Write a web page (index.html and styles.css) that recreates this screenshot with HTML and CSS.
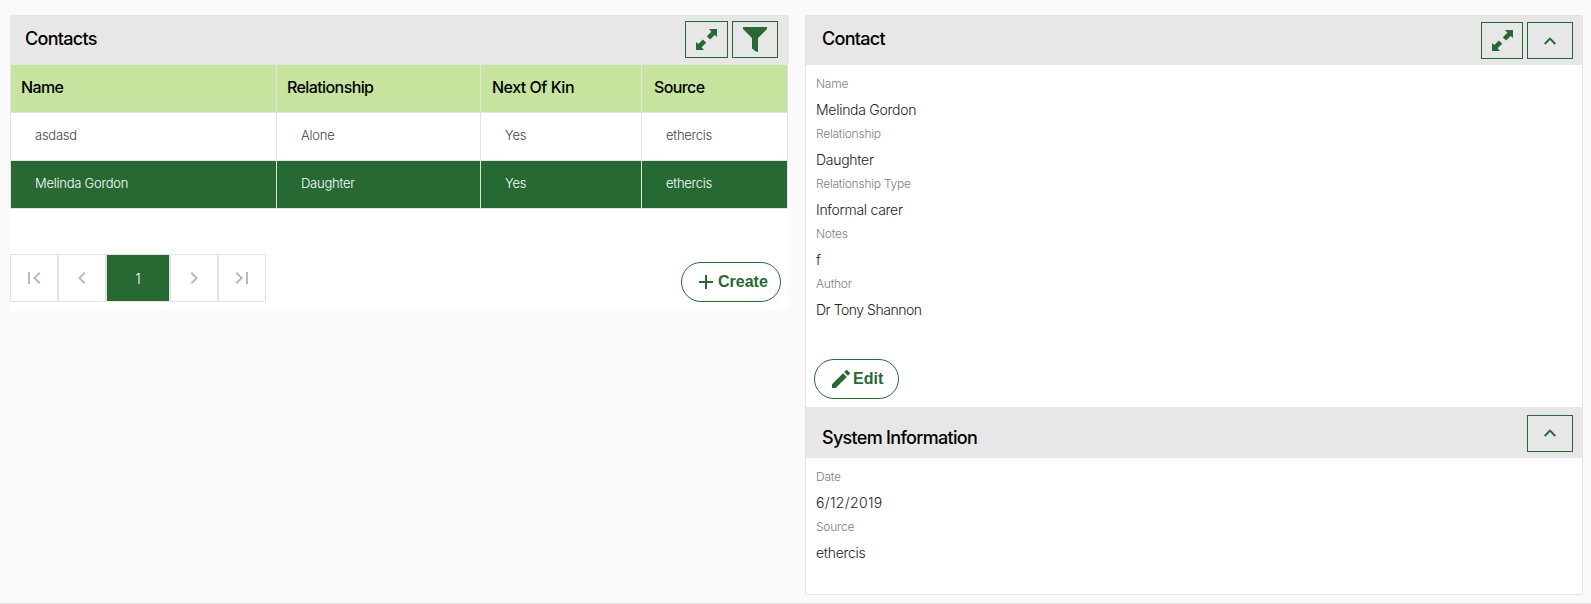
FILE: index.html
```
<!DOCTYPE html>
<html lang="en">
<head>
<meta charset="utf-8">
<title>Contacts</title>
<link rel="stylesheet" href="styles.css">
</head>
<body>
<main class="page">
  <section class="panel list-panel">
    <header class="panel-head">
      <h3 class="panel-title">Contacts</h3>
      <div class="tools">
        <button class="tool expand"><svg width="21" height="21" viewBox="0 0 21 21"><path d="M13 0h8v8l-2.300-2.100-4.600 4.600-3.300-3.200 4.600-4.600zM0 13l2.300 2.100 4.600-4.600 3.300 3.200-4.600 4.600L8 21H0z"/></svg></button>
        <button class="tool"><svg width="24" height="25" viewBox="0 0 24 25"><path d="M0 0h24v2L15 11v14l-2-.5-4-3V11L0 2z"/></svg></button>
      </div>
    </header>
    <table class="contacts">
      <colgroup><col class="c-name"><col class="c-rel"><col class="c-kin"><col class="c-source"></colgroup>
      <thead><tr><th>Name</th><th>Relationship</th><th class="wide">Next Of Kin</th><th>Source</th></tr></thead>
      <tbody>
        <tr><td>asdasd</td><td>Alone</td><td>Yes</td><td>ethercis</td></tr>
        <tr class="selected"><td>Melinda Gordon</td><td>Daughter</td><td>Yes</td><td>ethercis</td></tr>
      </tbody>
    </table>
    <footer class="list-foot">
      <nav class="pager">
        <button class="pg"><svg width="24" height="24" viewBox="0 0 24 24"><path d="M18.410 16.590L13.820 12l4.590-4.590L17 6l-6 6 6 6zM6 6h2v12H6z"/></svg></button>
        <button class="pg"><svg width="24" height="24" viewBox="0 0 24 24"><path d="M15.410 7.410L14 6l-6 6 6 6 1.410-1.410L10.830 12z"/></svg></button>
        <button class="pg current">1</button>
        <button class="pg"><svg width="24" height="24" viewBox="0 0 24 24"><path d="M10 6L8.590 7.410 13.170 12l-4.580 4.590L10 18l6-6z"/></svg></button>
        <button class="pg"><svg width="24" height="24" viewBox="0 0 24 24"><path d="M5.590 7.410L10.180 12l-4.590 4.590L7 18l6-6-6-6zM16 6h2v12h-2z"/></svg></button>
      </nav>
      <button class="pill create"><svg width="24" height="24" viewBox="0 0 24 24"><path d="M19 13h-6v6h-2v-6H5v-2h6V5h2v6h6v2z"/></svg>Create</button>
    </footer>
  </section>

  <section class="panel detail-panel">
    <header class="panel-head">
      <h3 class="panel-title">Contact</h3>
      <div class="tools">
        <button class="tool expand"><svg width="21" height="21" viewBox="0 0 21 21"><path d="M13 0h8v8l-2.300-2.100-4.600 4.600-3.300-3.200 4.600-4.600zM0 13l2.300 2.100 4.600-4.600 3.300 3.200-4.600 4.600L8 21H0z"/></svg></button>
        <button class="tool"><svg width="12" height="8" viewBox="0 0 12 8"><path d="M6 .3l6 6L10.600 7.700 6 3.100 1.400 7.700 0 6.300z"/></svg></button>
      </div>
    </header>
    <dl class="fields">
      <dt>Name</dt><dd>Melinda Gordon</dd>
      <dt>Relationship</dt><dd>Daughter</dd>
      <dt>Relationship Type</dt><dd>Informal carer</dd>
      <dt>Notes</dt><dd>f</dd>
      <dt>Author</dt><dd class="author">Dr Tony Shannon</dd>
    </dl>
    <div class="actions">
      <button class="pill edit"><svg width="24" height="24" viewBox="0 0 24 24"><path d="M3 17.250V21h3.750L17.810 9.940l-3.750-3.750L3 17.250zM20.710 7.040c.39-.39.39-1.020 0-1.410l-2.340-2.340a.996.996 0 0 0-1.410 0l-1.830 1.830 3.750 3.750 1.830-1.830z"/></svg>Edit</button>
    </div>
    <header class="panel-head system">
      <h3 class="panel-title">System Information</h3>
      <div class="tools">
        <button class="tool"><svg class="raised" width="12" height="8" viewBox="0 0 12 8"><path d="M6 .3l6 6L10.600 7.700 6 3.100 1.400 7.700 0 6.300z"/></svg></button>
      </div>
    </header>
    <dl class="fields">
      <dt>Date</dt><dd class="date">6/12/2019</dd>
      <dt>Source</dt><dd>ethercis</dd>
    </dl>
  </section>
</main>
</body>
</html>
```
FILE: styles.css
```
* { box-sizing: border-box; }
body {
  margin: 0;
  background: #fafafa;
  font-family: Inter, "Liberation Sans", sans-serif;
  color: #000;
}
button { margin: 0; padding: 0; font: inherit; cursor: pointer; }
svg { display: block; fill: currentColor; flex: none; }

.page {
  display: flex;
  align-items: flex-start;
  gap: 16px;
  height: 604px;
  padding: 15px 8px 0 10px;
  border-bottom: 1px solid #e3e3e3;
}
.panel { background: #fff; border-radius: 2px; overflow: hidden; }
.list-panel { width: 779px; height: 295px; border-radius: 0 0 2px 2px; }
.detail-panel { width: 778px; height: 580px; border: 1px solid #e3e3e3; }

.panel-head {
  display: flex;
  justify-content: space-between;
  align-items: flex-start;
  height: 49px;
  padding: 6px 11px 0 15px;
  background: #e7e7e7;
}
.panel-title {
  margin: 6px 0 0;
  font-size: 18px;
  line-height: 24px;
  font-weight: 500;
  letter-spacing: -0.7px;
}
.tools { display: flex; gap: 4px; }
.tool {
  display: flex;
  align-items: center;
  justify-content: center;
  width: 46px;
  height: 37px;
  border: 1px solid #266932;
  background: transparent;
  color: #266932;
}
.expand { width: 43px; }
.detail-panel .expand { width: 42px; }
.detail-panel .panel-head { padding: 6px 9px 0 16px; }
.detail-panel .panel-title { margin-top: 5px; }
.detail-panel .system { height: 51px; padding-top: 8px; }
.detail-panel .system .panel-title { margin-top: 11px; }
.raised { margin-bottom: 1px; }

.contacts {
  width: 778px;
  table-layout: fixed;
  border-collapse: separate;
  border-spacing: 0;
  border-top: 1px solid #e3e3e3;
}
.c-name { width: 267px; }
.c-rel { width: 204px; }
.c-kin { width: 161px; }
.c-source { width: 146px; }
.contacts th, .contacts td {
  height: 48px;
  padding: 0 0 3px 24px;
  border-right: 1px solid #e3e3e3;
  border-bottom: 1px solid #e3e3e3;
  text-align: left;
  font-size: 13px;
  font-weight: 300;
  color: #444;
  letter-spacing: -0.25px;
}
.contacts th {
  padding: 0 0 3px 10px;
  background: #c6e49d;
  color: #000;
  font-size: 16px;
  font-weight: 500;
  letter-spacing: -0.6px;
}
.contacts .wide { padding-left: 11px; letter-spacing: -0.5px; }
.contacts th:first-child, .contacts td:first-child { border-left: 1px solid #e3e3e3; }
.contacts th:last-child { padding-left: 12px; }
.contacts .selected td { background: #266932; color: #fff; }

.list-foot {
  display: flex;
  justify-content: space-between;
  align-items: flex-start;
  padding: 45px 8px 0 0;
}
.pager { display: flex; }
.pg {
  display: flex;
  align-items: center;
  justify-content: center;
  width: 48px;
  height: 48px;
  border: 1px solid #e3e3e3;
  background: #fff;
  color: #b9b9b9;
}
.current { width: 64px; background: #266932; color: #fff; font-size: 14px; font-weight: 300; }

.pill {
  display: flex;
  align-items: center;
  height: 40px;
  border: 1px solid #266932;
  border-radius: 20px;
  background: #fff;
  color: #266932;
  font: bold 16px/24px "Liberation Sans", Arial, sans-serif;
}
.create { width: 100px; margin-top: 8px; padding-left: 12px; }
.edit { width: 85px; padding-left: 14px; }

.fields { margin: 0; padding: 9px 10px 0; }
.fields dt {
  height: 20px;
  font-size: 12px;
  line-height: 20px;
  font-weight: 300;
  letter-spacing: -0.24px;
  color: #808080;
}
.fields dd {
  height: 30px;
  margin: 0;
  padding-top: 4px;
  font-size: 14px;
  line-height: 24px;
  font-weight: 300;
  letter-spacing: -0.28px;
  color: #222;
}
.fields .author { letter-spacing: -0.47px; }
.fields .date { letter-spacing: 0.35px; }
.actions { height: 83px; padding: 35px 8px 0; }
```
